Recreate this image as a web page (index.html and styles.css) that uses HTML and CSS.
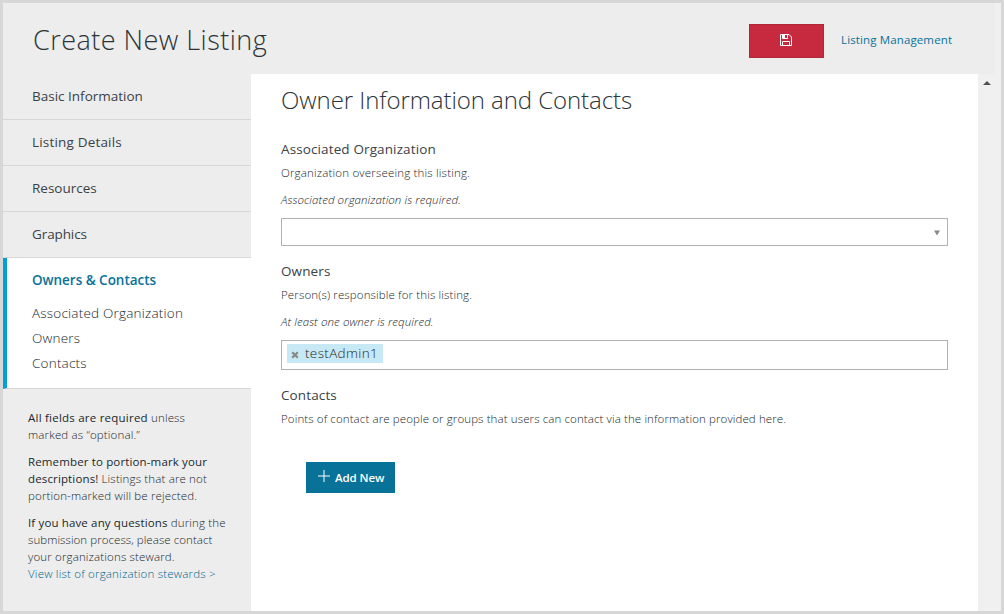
FILE: index.html
```html
<!DOCTYPE html>
<html lang="en">
<head>
<meta charset="utf-8">
<title>Create New Listing</title>
<link rel="stylesheet" href="styles.css">
</head>
<body>
<div class="window">
  <header class="header">
    <h1 class="title">Create New Listing</h1>
    <button class="save" aria-label="Save">
      <svg width="12" height="12" viewBox="0 0 12 12" fill="none" stroke="#fff"><path d="M.5.5H9L11.500 3V11.500H.5Z"/><path d="M2.500 11.500V7.500H9.500V11.500"/><path d="M2.500.5V4.500H7.500V.5"/><path d="M3 1H5V4H3Z" fill="#fff" stroke="none"/></svg>
    </button>
    <a class="manage">Listing Management</a>
  </header>
  <div class="body">
    <aside class="sidebar">
      <nav>
        <a class="nav-item">Basic Information</a>
        <a class="nav-item nav-details">Listing Details</a>
        <a class="nav-item">Resources</a>
        <a class="nav-item nav-graphics">Graphics</a>
        <div class="nav-active">
          <a class="nav-current">Owners &amp; Contacts</a>
          <a class="nav-sub">Associated Organization</a>
          <a class="nav-sub">Owners</a>
          <a class="nav-sub">Contacts</a>
        </div>
      </nav>
      <div class="notes">
        <p><b class="wide">All fields are required</b> unless<br>marked as “optional.”</p>
        <p><b>Remember to portion-mark your</b><br><b>descriptions!</b> Listings that are not<br>portion-marked will be rejected.</p>
        <p><b>If you have any questions</b> during the<br><span class="tight">submission process, please contact</span><br>your organizations steward.<br><a class="link">View list of organization stewards &gt;</a></p>
      </div>
    </aside>
    <main class="main">
      <h2 class="heading">Owner Information and Contacts</h2>
      <section class="field">
        <h3 class="label">Associated Organization</h3>
        <p class="desc">Organization overseeing this listing.</p>
        <p class="required">Associated organization is required.</p>
        <div class="select"><svg width="6" height="6" viewBox="0 0 6 6"><path d="M0 .5H6L3 5.500Z" fill="#888"/></svg></div>
      </section>
      <section class="field">
        <h3 class="label">Owners</h3>
        <p class="desc person">Person(s) responsible for this listing.</p>
        <p class="required">At least one owner is required.</p>
        <div class="tags"><div class="tag"><svg width="8" height="8" viewBox="0 0 8 8"><path d="M1.200 1.200L6.800 6.800M6.800 1.200L1.200 6.800" stroke="#888" stroke-width="2.200"/></svg><span class="tag-text">testAdmin1</span></div></div>
      </section>
      <section class="field">
        <h3 class="label">Contacts</h3>
        <p class="desc long">Points of contact are people or groups that users can contact via the information provided here.</p>
        <button class="add"><svg width="12" height="12" viewBox="0 0 12 12"><path d="M6 0V12M0 6H12" stroke="#fff"/></svg><span>Add New</span></button>
      </section>
    </main>
    <div class="scrollbar"><svg width="8" height="4" viewBox="0 0 8 4"><path d="M0 4L4 0L8 4Z" fill="#505050"/></svg></div>
  </div>
</div>
</body>
</html>
```
FILE: styles.css
```css
* { box-sizing: border-box; }
body { margin: 0; font-family: "Open Sans", "Noto Sans", sans-serif; font-weight: 300; color: #3a4247; }
h1, h2, h3, p { margin: 0; font-weight: inherit; }
button { border: 0; padding: 0; font: inherit; }
svg { display: block; flex: none; }
.window { width: 1004px; height: 614px; border: 3px solid #d7d7d7; background: #ededed; display: flex; flex-direction: column; }
.header { height: 71px; flex: none; display: flex; align-items: flex-start; padding-left: 30px; border-right: 6px solid #f0f0f0; }
.title { width: 716px; font-size: 27px; line-height: 36px; padding-top: 19px; letter-spacing: .47px; color: #2c3439; }
.save { width: 75px; height: 34px; margin-top: 21px; background: #c72a3e; border: 1px solid #ae2839; display: flex; align-items: center; justify-content: center; padding: 0 1px 2px 0; }
.manage { margin: 28px 0 0 17px; font-size: 11.500px; line-height: 18px; letter-spacing: .13px; font-weight: 400; color: #087299; }
.body { flex: 1; display: flex; min-height: 0; }
.sidebar { width: 248px; flex: none; }
.nav-item { display: block; height: 46px; padding-left: 29px; border-bottom: 1px solid #d7d7d7; font-size: 13.500px; line-height: 45px; font-weight: 400; }
.nav-details { letter-spacing: .18px; }
.nav-graphics { letter-spacing: -.1px; }
.nav-active { height: 131px; padding: 10px 0 0 25px; border-left: 4px solid #009fd6; border-bottom: 1px solid #d7d7d7; background: #fff; }
.nav-current { display: block; font-size: 13.500px; line-height: 25px; font-weight: 600; color: #087299; margin-bottom: 8px; letter-spacing: -.03px; }
.nav-sub { display: block; font-size: 13.500px; line-height: 25px; letter-spacing: .21px; color: #20282c; }
.notes { padding: 20px 0 0 25px; font-size: 11.500px; line-height: 17px; letter-spacing: .15px; color: #20282c; white-space: nowrap; }
.notes p { margin-bottom: 10px; }
.notes b { font-weight: 500; letter-spacing: .14px; }
.notes .wide { letter-spacing: .23px; }
.tight { letter-spacing: .06px; }
.notes .link { color: #00658c; letter-spacing: .2px; }
.main { width: 727px; flex: none; background: #fff; padding: 8px 30px 0; }
.heading { font-size: 24px; line-height: 36px; margin-bottom: 20px; letter-spacing: -.07px; color: #2c3439; }
.field { margin-bottom: 14px; }
.label { font-size: 13.500px; line-height: 22px; font-weight: 400; letter-spacing: .12px; }
.desc { font-size: 11.500px; line-height: 18px; padding-top: 4px; letter-spacing: .18px; color: #20282c; white-space: nowrap; }
.person { letter-spacing: .13px; }
.long { letter-spacing: .11px; }
.required { font-size: 11.500px; line-height: 18px; font-style: italic; margin: 9px 0; letter-spacing: .08px; color: #20282c; }
.select { height: 28px; border: 1px solid #b0b0b0; display: flex; align-items: center; justify-content: flex-end; padding: 1px 7px 0 0; }
.tags { height: 30px; border: 1px solid #b0b0b0; padding: 3px 5px; display: flex; align-items: flex-start; }
.tag { display: flex; align-items: center; height: 19px; width: 96px; padding-left: 4px; gap: 6px; background: #c7e9f5; font-size: 13.500px; line-height: 19px; letter-spacing: .35px; color: #20282c; }
.tag svg { margin-top: 2px; }
.tag-text { margin-top: -1px; }
.add { width: 89px; height: 31px; margin: 34px 0 0 25px; display: flex; align-items: center; padding-left: 12px; gap: 5px; background: #087299; color: #fff; font-size: 11.500px; font-weight: 600; letter-spacing: -.1px; }
.add svg { margin-bottom: 3px; }
.scrollbar { width: 23px; background: #f0f0f0; padding: 7px 0 0 5px; }
```
